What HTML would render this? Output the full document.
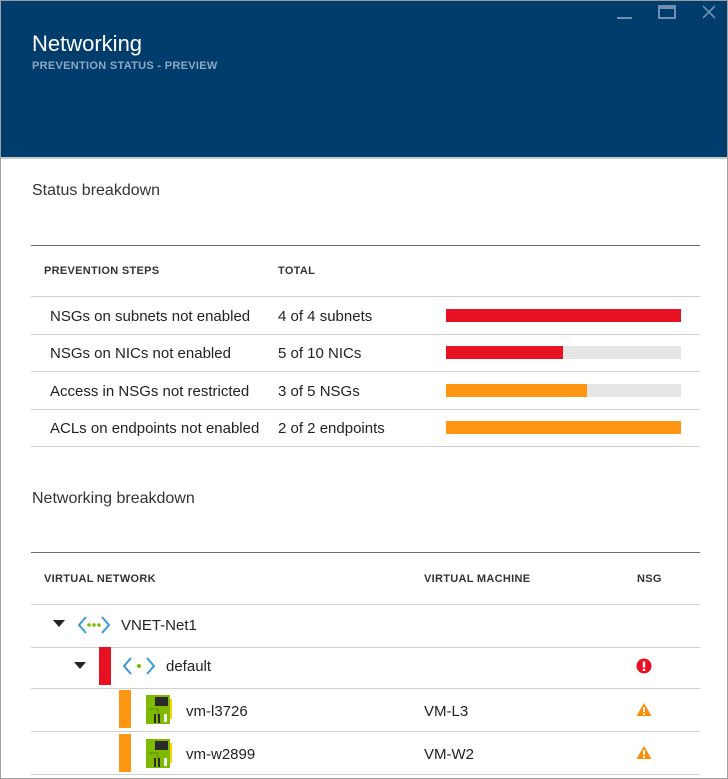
<!DOCTYPE html>
<html><head><style>
*{margin:0;padding:0;box-sizing:border-box}
body{width:728px;height:779px;background:#fff;font-family:"Liberation Sans",sans-serif;position:relative;overflow:hidden;color:#222}
.a{position:absolute;white-space:nowrap}
.hd{left:0;top:0;width:728px;height:158px;background:#003c6c;border:1px solid #9a9a9a;border-bottom:none}
.frame{left:0;top:0;width:728px;height:779px;border:1px solid #a0a0a0;border-top:none}
.ln{position:absolute;left:31px;width:669px;height:1px;background:#d0d0d0}
.dk{background:#6a6a6a}
.th{font-size:11px;font-weight:bold;color:#333;letter-spacing:.3px}
.td{font-size:15px;color:#222}
.bar{position:absolute;height:13px}
</style></head><body>
<div class="a hd"></div>
<div class="a" style="left:0;top:157px;width:728px;height:2px;background:#c8c8c8"></div>
<div class="a frame"></div>
<div class="a" style="left:32px;top:31px;font-size:22px;color:#fff">Networking</div>
<div class="a" style="left:32px;top:60px;font-size:11px;color:#8ea8c4;font-weight:bold;letter-spacing:.3px">PREVENTION STATUS - PREVIEW</div>
<div class="a" style="left:617px;top:17px;width:15px;height:2px;background:#6f8fb0"></div>
<div class="a" style="left:658px;top:5px;width:18px;height:14px;border:2px solid #6f8fb0;border-top-width:4px"></div>
<svg class="a" style="left:701px;top:4px" width="16" height="16"><path d="M2 2L14 14M14 2L2 14" stroke="#6f8fb0" stroke-width="1.6"/></svg>

<div class="a" style="left:32px;top:182px;font-size:16px;color:#333">Status breakdown</div>
<div class="ln dk" style="top:245px"></div>
<div class="a th" style="left:44px;top:265px">PREVENTION STEPS</div>
<div class="a th" style="left:278px;top:265px">TOTAL</div>
<div class="ln" style="top:296px"></div>
<div class="ln" style="top:334px"></div>
<div class="ln" style="top:371px"></div>
<div class="ln" style="top:409px"></div>
<div class="ln" style="top:446px"></div>
<div class="a td" style="left:50px;top:308px">NSGs on subnets not enabled</div>
<div class="a td" style="left:278px;top:308px">4 of 4 subnets</div>
<div class="a td" style="left:50px;top:345px">NSGs on NICs not enabled</div>
<div class="a td" style="left:278px;top:345px">5 of 10 NICs</div>
<div class="a td" style="left:50px;top:383px">Access in NSGs not restricted</div>
<div class="a td" style="left:278px;top:383px">3 of 5 NSGs</div>
<div class="a td" style="left:50px;top:420px">ACLs on endpoints not enabled</div>
<div class="a td" style="left:278px;top:420px">2 of 2 endpoints</div>
<div class="bar" style="left:446px;top:309px;width:235px;background:#e81123"></div>
<div class="bar" style="left:446px;top:346px;width:235px;background:#e6e6e6"></div>
<div class="bar" style="left:446px;top:346px;width:117px;background:#e81123"></div>
<div class="bar" style="left:446px;top:384px;width:235px;background:#e6e6e6"></div>
<div class="bar" style="left:446px;top:384px;width:141px;background:#ff9611"></div>
<div class="bar" style="left:446px;top:421px;width:235px;background:#ff9611"></div>

<div class="a" style="left:32px;top:490px;font-size:16px;color:#333">Networking breakdown</div>
<div class="ln dk" style="top:552px"></div>
<div class="a th" style="left:44px;top:573px">VIRTUAL NETWORK</div>
<div class="a th" style="left:424px;top:573px">VIRTUAL MACHINE</div>
<div class="a th" style="left:637px;top:573px">NSG</div>
<div class="ln" style="top:604px"></div>
<div class="ln" style="top:647px"></div>
<div class="ln" style="top:688px"></div>
<div class="ln" style="top:731px"></div>
<div class="ln" style="top:774px"></div>

<svg class="a" style="left:53px;top:620px" width="12" height="8"><path d="M0 0H12L6 7Z" fill="#222"/></svg>
<svg class="a" style="left:78px;top:615px" width="32" height="20"><path d="M8 2L1 10L8 18M24 2L31 10L24 18" stroke="#3a9ad9" stroke-width="2" fill="none"/><circle cx="11" cy="10" r="1.8" fill="#7fba00"/><circle cx="16" cy="10" r="1.8" fill="#7fba00"/><circle cx="21" cy="10" r="1.8" fill="#7fba00"/></svg>
<div class="a td" style="left:121px;top:617px;font-size:15px">VNET-Net1</div>

<svg class="a" style="left:74px;top:662px" width="12" height="8"><path d="M0 0H12L6 7Z" fill="#222"/></svg>
<div class="a" style="left:99px;top:647px;width:12px;height:38px;background:#e81123"></div>
<svg class="a" style="left:123px;top:656px" width="32" height="20"><path d="M8 2L1 10L8 18M24 2L31 10L24 18" stroke="#3a9ad9" stroke-width="2" fill="none"/><circle cx="16" cy="10" r="2" fill="#7fba00"/></svg>
<div class="a td" style="left:166px;top:658px;font-size:15px">default</div>
<svg class="a" style="left:636px;top:658px" width="16" height="16"><circle cx="8" cy="8" r="7.5" fill="#e81123"/><rect x="6.8" y="3.5" width="2.4" height="6" fill="#fff"/><rect x="6.8" y="10.8" width="2.4" height="2.2" fill="#fff"/></svg>

<div class="a" style="left:119px;top:690px;width:12px;height:38px;background:#ff9611"></div>
<div class="a" style="left:119px;top:734px;width:12px;height:38px;background:#ff9611"></div>
<svg class="a" style="left:146px;top:695px" width="26" height="30"><rect x="0" y="0" width="24" height="29" fill="#7fba00"/><rect x="24" y="4" width="2" height="20" fill="#ffd400"/><rect x="9" y="2" width="13" height="9" fill="#2a2a2a"/><path d="M3 14H12V22" stroke="#5c8a00" fill="none"/><rect x="8" y="19" width="2" height="9" fill="#2a2a2a"/><rect x="12" y="19" width="2" height="9" fill="#2a2a2a"/><rect x="18" y="19" width="3" height="8" fill="#eee"/></svg>
<svg class="a" style="left:146px;top:739px" width="26" height="30"><rect x="0" y="0" width="24" height="29" fill="#7fba00"/><rect x="24" y="4" width="2" height="20" fill="#ffd400"/><rect x="9" y="2" width="13" height="9" fill="#2a2a2a"/><path d="M3 14H12V22" stroke="#5c8a00" fill="none"/><rect x="8" y="19" width="2" height="9" fill="#2a2a2a"/><rect x="12" y="19" width="2" height="9" fill="#2a2a2a"/><rect x="18" y="19" width="3" height="8" fill="#eee"/></svg>
<div class="a td" style="left:186px;top:703px;font-size:15px">vm-l3726</div>
<div class="a td" style="left:186px;top:746px;font-size:15px">vm-w2899</div>
<div class="a td" style="left:424px;top:703px">VM-L3</div>
<div class="a td" style="left:424px;top:746px">VM-W2</div>
<svg class="a" style="left:636px;top:702px" width="16" height="15"><path d="M8 1L15.5 14H0.5Z" fill="#ff8c00"/><rect x="7" y="5" width="2" height="5" fill="#fff"/><rect x="7" y="11" width="2" height="2" fill="#fff"/></svg>
<svg class="a" style="left:636px;top:745px" width="16" height="15"><path d="M8 1L15.5 14H0.5Z" fill="#ff8c00"/><rect x="7" y="5" width="2" height="5" fill="#fff"/><rect x="7" y="11" width="2" height="2" fill="#fff"/></svg>
</body></html>
